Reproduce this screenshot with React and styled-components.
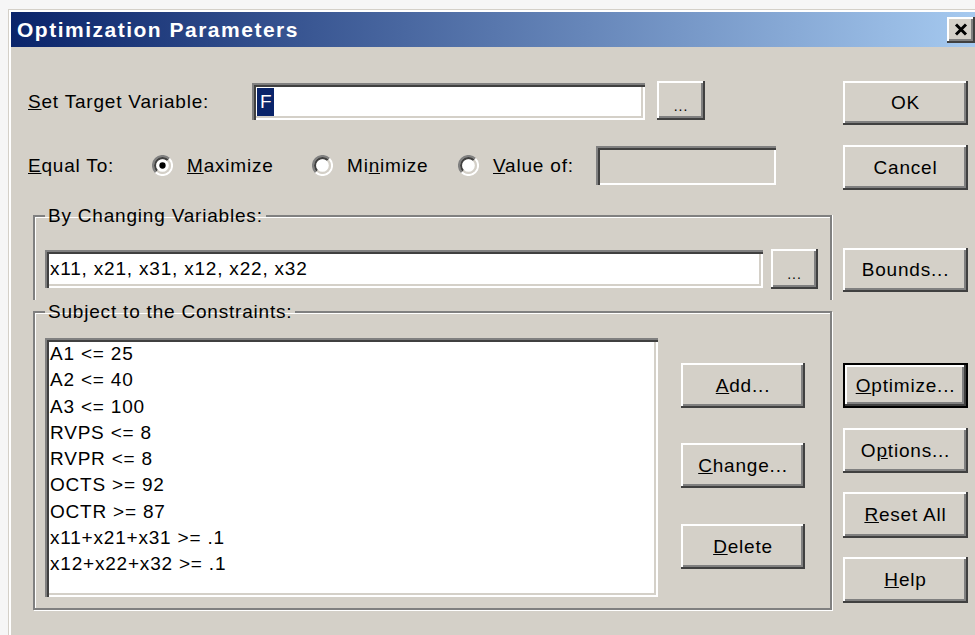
import React from 'react'
import styled, { createGlobalStyle } from 'styled-components'

const face = '#d4d0c8'

const GlobalStyle = createGlobalStyle`
  html, body {
    margin: 0;
    padding: 0;
    background: #f6f6f6;
    overflow: hidden;
  }
  body {
    font-family: 'Liberation Sans', Arial, sans-serif;
  }
`

const Window = styled.div`
  margin: 9px 0 0 8px;
  width: 975px;
  height: 640px;
  box-sizing: border-box;
  background: ${face};
  border: 1px solid ${face};
  padding: 2px;
  box-shadow: inset 2px 2px 0 #ffffff;
`

const TitleBar = styled.div`
  height: 35px;
  display: flex;
  align-items: center;
  justify-content: space-between;
  padding: 0 5px 0 6px;
  background: linear-gradient(to right, #0a246a, #a6caf0);
`

const Title = styled.span`
  font-family: 'Liberation Sans', Arial, sans-serif;
  font-weight: bold;
  font-size: 21px;
  letter-spacing: 1.5px;
  color: #ffffff;
`

const CloseButton = styled.div`
  width: 28px;
  height: 26px;
  display: flex;
  align-items: center;
  justify-content: center;
  background: ${face};
  box-shadow: inset -2px -2px 0 #404040, inset 2px 2px 0 #ffffff, inset -4px -4px 0 #808080;
`

const Body = styled.div`
  display: flex;
  padding: 34px 0 0 17px;
`

const LeftPane = styled.div`
  width: 804px;
  display: flex;
  flex-direction: column;
`

const RightPane = styled.div`
  width: 125px;
  margin-left: 11px;
  display: flex;
  flex-direction: column;
`

const Text = styled.span`
  font-size: 19px;
  letter-spacing: 0.8px;
  color: #000;
  white-space: nowrap;
`

const Label = styled(Text)`
  width: ${p => p.$w}px;
  flex: none;
`

const Button = styled.button`
  box-sizing: border-box;
  width: ${p => p.$w || 125}px;
  height: ${p => p.$h || 45}px;
  margin-top: ${p => p.$mt || 0}px;
  flex: none;
  padding: 0;
  background: ${face};
  border: ${p => (p.$default ? '2px solid #000' : 'none')};
  box-shadow: inset -2px -2px 0 #404040, inset 2px 2px 0 #ffffff, inset -4px -4px 0 #808080;
  font-family: 'Liberation Sans', Arial, sans-serif;
  font-size: 19px;
  letter-spacing: 0.8px;
  color: #000;
`

const Dots = styled.span`
  font-size: 14px;
  letter-spacing: 1px;
  position: relative;
  top: 4px;
`

const Field = styled.div`
  box-sizing: border-box;
  width: ${p => p.$w}px;
  height: ${p => p.$h}px;
  margin-top: ${p => p.$mt || 0}px;
  flex: none;
  display: flex;
  align-items: center;
  padding-left: 5px;
  background: ${p => (p.$disabled ? face : '#ffffff')};
  box-shadow: inset 2px 2px 0 #808080, inset 4px 4px 0 #404040, inset -2px -2px 0 #ffffff, inset -4px -4px 0 ${face};
  font-size: 19px;
  letter-spacing: 0.8px;
  white-space: nowrap;
`

const Selected = styled.span`
  display: inline-block;
  background: #0a246a;
  color: #ffffff;
  padding: 3px 2px 3px 3px;
`

const Row = styled.div`
  display: flex;
  align-items: ${p => p.$align || 'center'};
  height: ${p => p.$h}px;
  margin-top: ${p => p.$mt || 0}px;
`

const Option = styled.label`
  width: ${p => (p.$w ? `${p.$w}px` : 'auto')};
  flex: none;
  display: flex;
  align-items: center;
  gap: 14px;
`

const Group = styled.fieldset`
  margin: ${p => p.$mt || 0}px 0 0 5px;
  width: 799px;
  box-sizing: border-box;
  min-width: 0;
  padding: ${p => p.$pad};
  border: 2px solid #808080;
  border-bottom: ${p => (p.$open ? 'none' : '2px solid #808080')};
  box-shadow: ${p =>
    p.$open
      ? 'inset 1px 1px 0 #ffffff, 1px 0 0 #ffffff'
      : 'inset 1px 1px 0 #ffffff, 1px 1px 0 #ffffff'};
`

const Legend = styled.legend`
  padding: 0 3px;
  line-height: 24px;
  font-size: 19px;
  letter-spacing: 0.8px;
  color: #000;
`

const ListBox = styled.div`
  box-sizing: border-box;
  width: 613px;
  height: 259px;
  flex: none;
  padding: 3px 5px;
  background: #ffffff;
  box-shadow: inset 2px 2px 0 #808080, inset 4px 4px 0 #404040, inset -2px -2px 0 #ffffff, inset -4px -4px 0 ${face};
`

const ListItem = styled.div`
  font-size: 19px;
  letter-spacing: 0.8px;
  line-height: 26.3px;
  white-space: nowrap;
`

const ButtonColumn = styled.div`
  display: flex;
  flex-direction: column;
  margin-left: 23px;
`

const Radio = ({ checked }) => (
  <svg width="21" height="21" viewBox="0 0 20 20">
    <path d="M3.6 16.4 A9 9 0 0 1 16.4 3.6" stroke="#808080" strokeWidth="2" fill="none" />
    <path d="M16.4 3.6 A9 9 0 0 1 3.6 16.4" stroke="#ffffff" strokeWidth="2" fill="none" />
    <path d="M5 15 A7 7 0 0 1 15 5" stroke="#404040" strokeWidth="2" fill="none" />
    <path d="M15 5 A7 7 0 0 1 5 15" stroke={face} strokeWidth="2" fill="none" />
    <circle cx="10" cy="10" r="6" fill="#ffffff" />
    {checked && <circle cx="10" cy="10" r="3" fill="#000000" />}
  </svg>
)

const constraints = [
  'A1 <= 25',
  'A2 <= 40',
  'A3 <= 100',
  'RVPS <= 8',
  'RVPR <= 8',
  'OCTS >= 92',
  'OCTR >= 87',
  'x11+x21+x31 >= .1',
  'x12+x22+x32 >= .1',
]

export default function App() {
  return (
    <>
      <GlobalStyle />
      <Window>
        <TitleBar>
          <Title>Optimization Parameters</Title>
          <CloseButton>
            <svg width="14" height="13" viewBox="0 0 14 13">
              <path d="M2 1.5 L12 11.5 M12 1.5 L2 11.5" stroke="#000" strokeWidth="3" />
            </svg>
          </CloseButton>
        </TitleBar>

        <Body>
          <LeftPane>
            <Row $h={40} $align="flex-start">
              <Label $w={224} style={{ marginTop: 10 }}>
                <u>S</u>et Target Variable:
              </Label>
              <Field $w={393} $h={37} $mt={2}>
                <Selected>F</Selected>
              </Field>
              <Button $w={48} $h={39} style={{ marginLeft: 12 }}>
                <Dots>...</Dots>
              </Button>
            </Row>

            <Row $h={39} $mt={25}>
              <Label $w={124}>
                <u>E</u>qual To:
              </Label>
              <Option $w={160}>
                <Radio checked />
                <Text>
                  <u>M</u>aximize
                </Text>
              </Option>
              <Option $w={146}>
                <Radio />
                <Text>
                  Mi<u>n</u>imize
                </Text>
              </Option>
              <Option>
                <Radio />
                <Text>
                  <u>V</u>alue of:
                </Text>
              </Option>
              <Field $w={180} $h={39} $disabled style={{ marginLeft: 22 }} />
            </Row>

            <Group $mt={19} $pad="21px 12px 11px 10px" $open>
              <Legend>By Changing Variables:</Legend>
              <Row $h={40}>
                <Field $w={718} $h={38}>
                  x11, x21, x31, x12, x22, x32
                </Field>
                <Button $w={47} $h={40} style={{ marginLeft: 8 }}>
                  <Dots>...</Dots>
                </Button>
              </Row>
            </Group>

            <Group $pad="14px 12px 11px 10px">
              <Legend>Subject to the Constraints:</Legend>
              <Row $align="flex-start">
                <ListBox>
                  {constraints.map(c => (
                    <ListItem key={c}>{c}</ListItem>
                  ))}
                </ListBox>
                <ButtonColumn>
                  <Button $w={124} $mt={25}>
                    <u>A</u>dd...
                  </Button>
                  <Button $w={124} $mt={35}>
                    <u>C</u>hange...
                  </Button>
                  <Button $w={124} $mt={36}>
                    <u>D</u>elete
                  </Button>
                </ButtonColumn>
              </Row>
            </Group>
          </LeftPane>

          <RightPane>
            <Button $h={44}>OK</Button>
            <Button $mt={20}>Cancel</Button>
            <Button $h={44} $mt={58}>
              Bounds...
            </Button>
            <Button $mt={71} $default>
              <u>O</u>ptimize...
            </Button>
            <Button $mt={20}>
              O<u>p</u>tions...
            </Button>
            <Button $h={46} $mt={19}>
              <u>R</u>eset All
            </Button>
            <Button $h={46} $mt={19}>
              <u>H</u>elp
            </Button>
          </RightPane>
        </Body>
      </Window>
    </>
  )
}
